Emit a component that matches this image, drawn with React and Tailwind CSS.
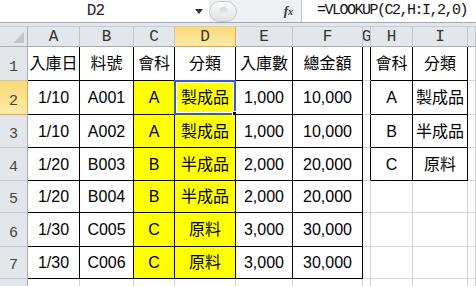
import React from "react";

const cols = ["A", "B", "C", "D", "E", "F", "G", "H", "I", ""];
const rowHeights = ["h-[34px]", "h-[34px]", "h-[33px]", "h-[33px]", "h-[32px]", "h-[34px]", "h-[32px]", "h-[10px]"];

const left = [
  ["入庫日", "料號", "會科", "分類", "入庫數", "總金額"],
  ["1/10", "A001", "A", "製成品", "1,000", "10,000"],
  ["1/10", "A002", "A", "製成品", "1,000", "10,000"],
  ["1/20", "B003", "B", "半成品", "2,000", "20,000"],
  ["1/20", "B004", "B", "半成品", "2,000", "20,000"],
  ["1/30", "C005", "C", "原料", "3,000", "30,000"],
  ["1/30", "C006", "C", "原料", "3,000", "30,000"],
];

const right = [
  ["會科", "分類"],
  ["A", "製成品"],
  ["B", "半成品"],
  ["C", "原料"],
];

const mono = { fontFamily: '"Liberation Mono", "DejaVu Sans Mono", monospace' };
const cellFont = { fontFamily: '"Liberation Sans", "Noto Sans CJK TC", sans-serif' };

function Cell({ r, c }) {
  // r: 0-based data row (0 = row 1), c: 0..9 column index
  const inLeft = r < 7 && c <= 5;
  const inRight = r < 4 && (c === 7 || c === 8);
  let text = "";
  if (inLeft) text = left[r][c];
  if (inRight) text = right[r][c - 7];

  const yellow = r >= 1 && r < 7 && (c === 2 || c === 3);
  const blackRight = (r < 7 && c <= 5) || (r < 4 && (c === 6 || c === 7 || c === 8));
  const blackBottom = inLeft || inRight;

  return (
    <div
      className={`relative flex items-center justify-center border-r border-b text-[16px] text-black ${
        yellow ? "bg-[#ffff00]" : "bg-white"
      } ${blackRight ? "border-r-black" : "border-r-[#d4d4d4]"} ${
        blackBottom ? "border-b-black" : "border-b-[#d4d4d4]"
      }`}
      style={cellFont}
    >
      <span className="pt-[1px]">{text}</span>
      {r === 1 && c === 3 && (
        <div className="absolute -left-[1px] -top-[1px] -right-[1px] -bottom-[1px] border-2 border-[#3559d6] ring-1 ring-inset ring-white">
          <div className="absolute -right-[4px] -bottom-[4px] w-[6px] h-[6px] bg-black border border-white" />
        </div>
      )}
    </div>
  );
}

export default function App() {
  return (
    <div className="w-[476px] h-[286px] overflow-hidden bg-white">
      {/* formula bar */}
      <div className="flex h-[23px] border-b border-[#a5aab2]">
        <div className="relative flex w-[209px] items-center justify-center bg-white text-[16px] text-[#222]" style={mono}>
          <span className="-ml-[18px] tracking-[-0.8px]">D2</span>
          <svg className="absolute right-[6px] top-[9px]" width="8" height="5" viewBox="0 0 8 5">
            <path d="M0 0h8L4 5z" fill="#333" />
          </svg>
        </div>
        <div className="flex w-[93px] items-center bg-[#eef0f3] border-r border-[#c3c7cd]">
          <div className="h-[21px] w-[28px] rounded-full border border-[#c4c8ce] bg-gradient-to-b from-[#fafbfc] to-[#dfe2e6] flex items-center justify-center">
            <div className="h-[9px] w-[9px] rounded-full bg-gradient-to-b from-[#d4d7db] to-[#f0f1f3]" />
          </div>
          <span className="ml-auto mr-[8px] text-[13px] italic font-bold text-[#333]" style={{ fontFamily: '"Liberation Serif", serif' }}>
            f<span className="text-[10px]">x</span>
          </span>
        </div>
        <div className="flex flex-1 items-center bg-white pl-[15px] text-[15px] tracking-[-1.5px] text-[#111]" style={mono}>
          =VLOOKUP(C2,H:I,2,0)
        </div>
      </div>
      <div className="h-[4px] bg-[#e3e6ea] border-b border-[#c9cdd3]" />

      {/* sheet grid */}
      <div className="grid grid-cols-[28px_52px_54px_41px_61px_57px_70px_8px_42px_55px_8px]">
        {/* corner */}
        <div className="relative h-[20px] bg-[#e3e6ea] border-r border-b border-[#a9aeb5]">
          <svg className="absolute right-[3px] bottom-[3px]" width="11" height="11" viewBox="0 0 11 11">
            <path d="M11 0v11H0z" fill="#c2c6cc" />
          </svg>
        </div>
        {cols.map((c, i) => (
          <div
            key={c + i}
            className={`flex h-[20px] items-center justify-center border-r border-b text-[16px] text-[#333] overflow-hidden ${
              c === "D"
                ? "bg-gradient-to-b from-[#f9da76] to-[#fdeaa6] border-[#e9a640]"
                : "bg-[#e3e6ea] border-r-[#c2c6cc] border-b-[#a9aeb5]"
            }`}
            style={mono}
          >
            {c}
          </div>
        ))}

        {rowHeights.map((h, r) => (
          <React.Fragment key={r}>
            <div
              className={`${h} flex items-end justify-center pb-[1px] border-r border-b text-[15px] text-[#444] overflow-hidden ${
                r === 1
                  ? "bg-gradient-to-b from-[#f9da76] to-[#fdeaa6] border-[#e9a640]"
                  : "bg-[#e3e6ea] border-r-[#a9aeb5] border-b-[#c2c6cc]"
              }`}
              style={mono}
            >
              {r < 7 ? r + 1 : ""}
            </div>
            {cols.map((c, i) => (
              <Cell key={i} r={r} c={i} />
            ))}
          </React.Fragment>
        ))}
      </div>
    </div>
  );
}
